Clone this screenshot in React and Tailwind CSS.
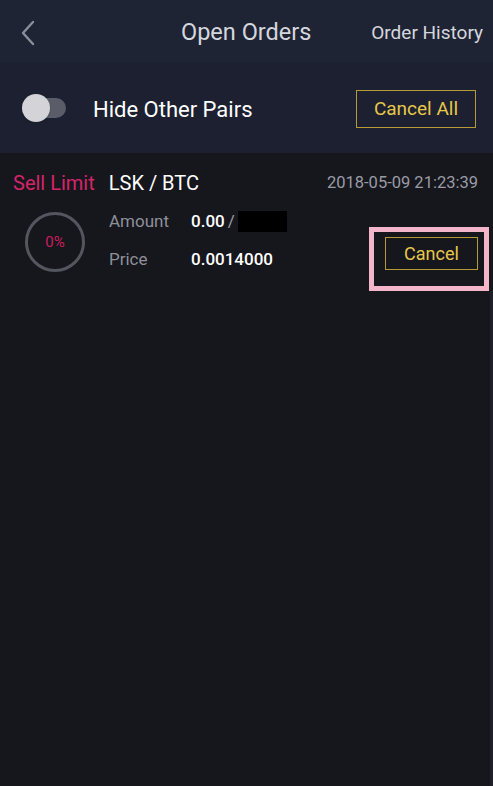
export default function App() {
  const font = { fontFamily: "Roboto, 'Noto Sans', sans-serif" };
  return (
    <div className="w-[493px] h-[786px] bg-[#16161d] flex flex-col overflow-hidden" style={font}>
      {/* Header */}
      <div className="h-[62px] bg-[#1f2434] flex items-center relative shrink-0 pt-[3px]">
        <div className="w-[60px] pl-[18px] flex items-center">
          <svg width="20" height="28" viewBox="0 0 20 28" fill="none">
            <path d="M15 3 L5 14 L15 25" stroke="#8a8e99" strokeWidth="2.4" strokeLinecap="round" strokeLinejoin="round" />
          </svg>
        </div>
        <div className="ml-[121px] text-[23.5px] text-[#d5d7de] leading-none">Open Orders</div>
        <div className="ml-auto mr-[10px] text-[19px] text-[#d5d7de] leading-none">Order History</div>
      </div>
      {/* Toggle row */}
      <div className="h-[91px] bg-[#1c2030] flex items-center shrink-0">
        <div className="relative w-[46px] h-[28px] ml-[22px] flex items-center">
          <div className="absolute left-[12px] w-[32px] h-[20px] rounded-full bg-[#5a5d68]" />
          <div className="absolute left-0 w-[28px] h-[28px] rounded-full bg-[#d3d3d8] shadow" />
        </div>
        <div className="ml-[25px] mt-[5px] text-[22px] text-white leading-none">Hide Other Pairs</div>
        <div className="ml-auto mr-[17px] mt-[2px] w-[120px] h-[38px] border border-[#b59a35] flex items-center justify-center text-[19px] text-[#e7c74a] leading-none">
          Cancel All
        </div>
      </div>
      {/* Order */}
      <div className="flex flex-col pt-[19px] relative">
        <div className="flex items-center h-[22px]">
          <div className="ml-[13px] text-[20px] text-[#d6246a] leading-none">Sell Limit</div>
          <div className="ml-[14px] text-[20px] text-white leading-none">LSK / BTC</div>
          <div className="ml-auto mr-[15px] text-[16.5px] text-[#9a9ca5] leading-none">2018-05-09 21:23:39</div>
        </div>
        <div className="flex mt-[15px]">
          <div className="ml-[25px] mt-[3px] w-[60px] h-[60px] rounded-full border-[3px] border-[#53565e] flex items-center justify-center text-[15px] text-[#c81f5e]">
            0%
          </div>
          <div className="ml-[24px] flex flex-col">
            <div className="flex items-center h-[24px]">
              <div className="w-[82px] text-[17px] text-[#8e9099] leading-none">Amount</div>
              <div className="text-[17px] text-white font-medium leading-none">0.00</div>
              <div className="ml-[3px] text-[17px] text-[#9a9ca5] leading-none">/</div>
              <div className="ml-[3px] w-[49px] h-[21px] bg-black" />
            </div>
            <div className="flex items-center h-[24px] mt-[14px]">
              <div className="w-[82px] text-[17px] text-[#8e9099] leading-none">Price</div>
              <div className="text-[17px] text-white font-medium leading-none">0.0014000</div>
            </div>
          </div>
          <div className="ml-auto mr-[4px] mt-[18px] w-[120px] h-[64px] border-[5px] border-[#f4b5cb] pt-[5px] pl-[11px]">
            <div className="w-[93px] h-[33px] border border-[#b59a35] flex items-center justify-center text-[18px] text-[#e7c74a] leading-none">
              Cancel
            </div>
          </div>
        </div>
      </div>
      <div className="flex-1 flex justify-end">
        <div className="w-[3px] bg-[#1e1f27]" />
      </div>
    </div>
  );
}
